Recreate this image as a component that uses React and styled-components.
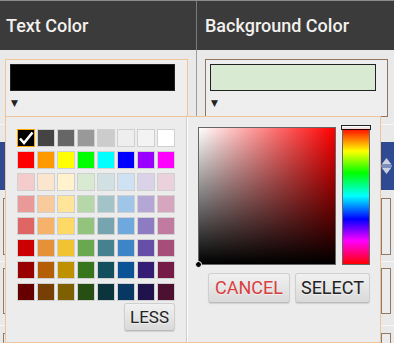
import React from "react";
import styled, { createGlobalStyle } from "styled-components";

const GlobalStyle = createGlobalStyle`
  * { box-sizing: border-box; }
  body {
    margin: 0;
    background: #e9e9e9;
    font-family: Roboto, "Liberation Sans", sans-serif;
  }
`;

const Page = styled.div`
  width: 394px;
  height: 343px;
  overflow: hidden;
  background: #e9e9e9;
`;

const HeaderRow = styled.div`
  display: grid;
  grid-template-columns: 197px 1fr;
  height: 50px;
  background: #3b3b3b;
  border-top: 1px solid #8c8c8c;
`;

const HeaderCell = styled.div`
  display: flex;
  align-items: center;
  padding-left: ${({ $pad }) => $pad}px;
  font-size: 18px;
  font-weight: 500;
  color: #f3f1ee;
  border-right: ${({ $divider }) => ($divider ? "1px solid #7a7a7a" : "none")};
`;

const ColorRow = styled.div`
  display: grid;
  grid-template-columns: 197px 1fr;
  height: 75px;
  border-bottom: 1px solid #f6f6f6;
`;

const Cell = styled.div`
  padding: 9px 0 0 ${({ $pad }) => $pad}px;
  border-right: ${({ $divider }) => ($divider ? "1px solid #9d9d9d" : "none")};
`;

const Replacer = styled.div`
  position: relative;
  width: ${({ $w }) => $w}px;
  height: 58px;
  padding: 4px;
  background: #eee;
  border: 1px solid ${({ $active }) => ($active ? "#f0c49b" : "#91765d")};
`;

const Preview = styled.div`
  width: ${({ $w }) => $w}px;
  height: 27px;
  border: 1px solid #222;
  background: ${({ $color }) => $color};
`;

const DropArrow = styled.div`
  height: 20px;
  padding: 4px 0 0 1px;
  font-family: "DejaVu Sans", sans-serif;
  font-size: 9px;
  line-height: 16px;
  color: #222;
`;

const Popup = styled.div`
  position: absolute;
  top: 56px;
  left: -1px;
  z-index: 5;
  display: flex;
  width: 376px;
  height: 227px;
  background: #ececec;
  border: 1px solid #f0c49b;
`;

const PaletteCol = styled.div`
  width: 181px;
  padding: 10px;
  border-right: 1px solid #ccc;
`;

const Palette = styled.div`
  display: grid;
  grid-template-columns: repeat(8, 20px);
  grid-auto-rows: 22px;
`;

const Swatch = styled.div`
  display: flex;
  align-items: center;
  justify-content: center;
  width: 18px;
  height: 18px;
  margin: 2px 1px;
  background: ${({ $color }) => $color};
  border: 1px solid ${({ $active }) => ($active ? "orange" : "#d0d0d0")};
`;

const LessRow = styled.div`
  display: flex;
  justify-content: flex-end;
  padding-right: 1px;
`;

const Button = styled.button`
  height: ${({ $h }) => $h}px;
  padding: 0 ${({ $px }) => $px}px;
  font-family: Roboto, "Liberation Sans", sans-serif;
  font-size: ${({ $size }) => $size}px;
  line-height: 1;
  text-transform: uppercase;
  color: ${({ $danger }) => ($danger ? "#d93f3f" : "#222")};
  background: linear-gradient(to bottom, #f1f1f1, #d9d9d9);
  border: 1px solid #cfcfcf;
  border-bottom-color: #bbb;
  border-radius: 3px;
  box-shadow: 0 1px 1px rgba(0, 0, 0, 0.12);
  text-shadow: 0 1px 0 #eee;
`;

const PickerCol = styled.div`
  width: 193px;
  padding: 10px;
  border-left: 1px solid #fff;
`;

const PickerTop = styled.div`
  position: relative;
  height: 138px;
`;

const ColorArea = styled.div`
  position: absolute;
  top: 0;
  left: 0;
  bottom: 0;
  width: 138px;
  border: 1px solid #666;
  background:
    linear-gradient(to top, #000, rgba(0, 0, 0, 0)),
    linear-gradient(to right, #fff, rgba(255, 255, 255, 0)),
    #f00;
`;

const Dragger = styled.div`
  position: absolute;
  left: -4px;
  bottom: -4px;
  width: 7px;
  height: 7px;
  border-radius: 5px;
  border: 1px solid #fff;
  background: #000;
`;

const HueBar = styled.div`
  position: absolute;
  top: 0;
  right: 0;
  bottom: 0;
  width: 28px;
  border: 1px solid #666;
  background: linear-gradient(
    to bottom,
    #f00 0%,
    #ff0 17%,
    #0f0 33%,
    #0ff 50%,
    #00f 67%,
    #f0f 83%,
    #f00 100%
  );
`;

const HueSlider = styled.div`
  position: absolute;
  top: -3px;
  left: -2px;
  right: -2px;
  height: 5px;
  border: 1px solid #000;
  background: #fff;
  opacity: 0.85;
`;

const ButtonRow = styled.div`
  display: flex;
  justify-content: flex-end;
  gap: 5px;
  margin-top: 8px;
`;

const BlueBar = styled.div`
  display: flex;
  align-items: center;
  justify-content: flex-end;
  height: 48px;
  margin-top: 17px;
  padding-right: 2px;
  background: #2e4a93;
`;

const LowerRow = styled.div`
  display: flex;
  justify-content: space-between;
  height: ${({ $h }) => $h}px;
  padding: ${({ $top }) => $top}px 3px 0 3px;
  border-bottom: 1px solid #f7f7f7;
`;

const LowerBox = styled.div`
  width: ${({ $w }) => $w}px;
  height: ${({ $h }) => $h}px;
  border: 1px solid #8f7a6a;
  background: #ececec;
`;

const palette = [
  ["#000000", "#444444", "#666666", "#999999", "#cccccc", "#eeeeee", "#f3f3f3", "#ffffff"],
  ["#ff0000", "#ff9900", "#ffff00", "#00ff00", "#00ffff", "#0000ff", "#9900ff", "#ff00ff"],
  ["#f4cccc", "#fce5cd", "#fff2cc", "#d9ead3", "#d0e0e3", "#cfe2f3", "#d9d2e9", "#ead1dc"],
  ["#ea9999", "#f9cb9c", "#ffe599", "#b6d7a8", "#a2c4c9", "#9fc5e8", "#b4a7d6", "#d5a6bd"],
  ["#e06666", "#f6b26b", "#ffd966", "#93c47d", "#76a5af", "#6fa8dc", "#8e7cc3", "#c27ba0"],
  ["#cc0000", "#e69138", "#f1c232", "#6aa84f", "#45818e", "#3d85c6", "#674ea7", "#a64d79"],
  ["#990000", "#b45f06", "#bf9000", "#38761d", "#134f5c", "#0b5394", "#351c75", "#741b47"],
  ["#660000", "#783f04", "#7f6000", "#274e13", "#0c343d", "#073763", "#20124d", "#4c1130"],
];

const Check = () => (
  <svg width="16" height="16" viewBox="0 0 16 16">
    <polyline points="2,8.5 6,13 14.5,2.5" fill="none" stroke="#fff" strokeWidth="2.6" />
  </svg>
);

const SortIcon = () => (
  <svg width="11" height="18" viewBox="0 0 11 18">
    <polygon points="5.5,1 10.5,7.5 0.5,7.5" fill="#c9d1e3" />
    <rect x="0" y="8.5" width="11" height="1" fill="#c9d1e3" />
    <polygon points="0.5,10.5 10.5,10.5 5.5,17" fill="#c9d1e3" />
  </svg>
);

const ColorPopup = () => (
  <Popup>
    <PaletteCol>
      <Palette>
        {palette.flat().map((c, i) => (
          <Swatch key={i} $color={c} $active={i === 0}>
            {i === 0 && <Check />}
          </Swatch>
        ))}
      </Palette>
      <LessRow>
        <Button $h={28} $px={5} $size={17}>less</Button>
      </LessRow>
    </PaletteCol>
    <PickerCol>
      <PickerTop>
        <ColorArea>
          <Dragger />
        </ColorArea>
        <HueBar>
          <HueSlider />
        </HueBar>
      </PickerTop>
      <ButtonRow>
        <Button $h={30} $px={6} $size={18} $danger>cancel</Button>
        <Button $h={30} $px={5} $size={18}>select</Button>
      </ButtonRow>
    </PickerCol>
  </Popup>
);

export default function App() {
  return (
    <Page>
      <GlobalStyle />
      <HeaderRow>
        <HeaderCell $pad={6} $divider>Text Color</HeaderCell>
        <HeaderCell $pad={8}>Background Color</HeaderCell>
      </HeaderRow>
      <ColorRow>
        <Cell $pad={5} $divider>
          <Replacer $w={183} $active>
            <Preview $w={165} $color="#000" />
            <DropArrow>▼</DropArrow>
            <ColorPopup />
          </Replacer>
        </Cell>
        <Cell $pad={8}>
          <Replacer $w={183}>
            <Preview $w={166} $color="#d9ead3" />
            <DropArrow>▼</DropArrow>
          </Replacer>
        </Cell>
      </ColorRow>
      <BlueBar>
        <SortIcon />
      </BlueBar>
      <LowerRow $h={72} $top={8}>
        <LowerBox $w={180} $h={57} />
        <LowerBox $w={10} $h={57} />
      </LowerRow>
      <LowerRow $h={64} $top={6}>
        <LowerBox $w={180} $h={46} />
        <LowerBox $w={10} $h={46} />
      </LowerRow>
      <LowerRow $h={70} $top={7}>
        <LowerBox $w={180} $h={57} />
        <LowerBox $w={10} $h={57} />
      </LowerRow>
    </Page>
  );
}
